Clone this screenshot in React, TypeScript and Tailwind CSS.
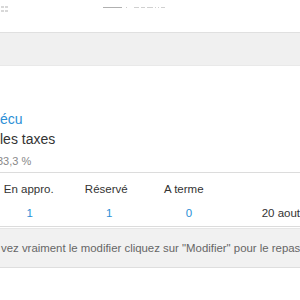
export default function App() {
  return (
    <div className="w-[300px] h-[300px] bg-white overflow-hidden font-['Liberation_Sans',Arial,sans-serif]">
      {/* faint top strip */}
      <div className="h-[32px] flex items-start">
        <div className="mt-[6px] ml-[1px] grid grid-cols-2 gap-x-[1px] gap-y-[2px]">
          <div className="w-[3px] h-[2px] bg-[#d8d8d8]" />
          <div className="w-[3px] h-[2px] bg-[#d8d8d8]" />
          <div className="w-[3px] h-[2px] bg-[#d8d8d8]" />
          <div className="w-[3px] h-[2px] bg-[#d8d8d8]" />
        </div>
        <div className="mt-[7px] ml-[95px] flex items-center gap-[2px]">
          <div className="w-[19px] h-[1px] bg-[#b0b0b0]" />
          <div className="w-[1px] h-[1px] bg-[#ccc] ml-[2px]" />
          <div className="w-[5px] h-[1px] bg-[#d0d0d0] ml-[5px]" />
          <div className="w-[4px] h-[1px] bg-[#d0d0d0]" />
          <div className="w-[6px] h-[1px] bg-[#d0d0d0]" />
          <div className="w-[1px] h-[1px] bg-[#d0d0d0]" />
          <div className="w-[1px] h-[1px] bg-[#d0d0d0]" />
          <div className="w-[4px] h-[1px] bg-[#d0d0d0]" />
        </div>
      </div>

      <div className="h-[34px] bg-[#f0f0f0] border-t border-b border-t-[#e0e0e0] border-b-[#e9e9e9]" />

      <div className="mt-[44px] text-[14px] leading-[18px] text-[#2b8fd6] whitespace-nowrap">écu</div>
      <div className="mt-[1px] text-[14px] leading-[20px] text-[#333] whitespace-nowrap">les taxes</div>
      <div className="mt-[5px] ml-[-3px] text-[11px] leading-[14px] text-[#888] whitespace-nowrap">33,3 %</div>

      <div className="mt-[4px] border-t border-[#dcdcdc]">
        <div className="pt-[9px] flex ml-[-10px] text-[11.5px] leading-[14px] text-[#333] whitespace-nowrap">
          <div className="w-[80px] text-center">En appro.</div>
          <div className="w-[80px] text-center">Réservé</div>
          <div className="w-[80px] text-center">A terme</div>
          <div className="w-[80px]" />
        </div>
        <div className="mt-[9px] flex ml-[-10px] text-[11.5px] leading-[16px] whitespace-nowrap">
          <div className="w-[80px] text-center text-[#2b8fd6]">1</div>
          <div className="w-[80px] text-center text-[#2b8fd6]">1</div>
          <div className="w-[80px] text-center text-[#2b8fd6]">0</div>
          <div className="pl-[33px] text-[#333]">20 aout</div>
        </div>
      </div>

      <div className="mt-[5px] border-t border-[#dcdcdc]" />

      <div className="mt-[1px] h-[40px] bg-[#f1f1f1] border-t border-b border-t-[#e6e6e6] border-b-[#dedede] pt-[12px]">
        <div className="ml-[1px] text-[11.4px] leading-[14px] text-[#666] whitespace-nowrap">
          vez vraiment le modifier cliquez sur "Modifier" pour le repas
        </div>
      </div>
    </div>
  )
}
